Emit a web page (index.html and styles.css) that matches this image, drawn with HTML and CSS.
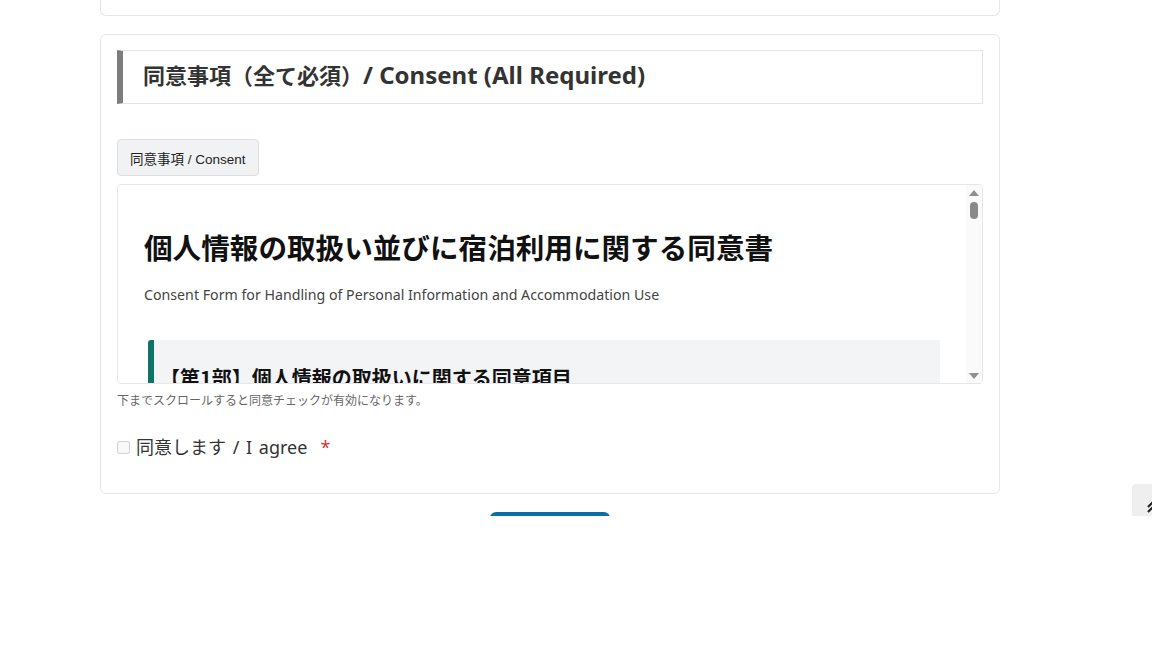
FILE: index.html
```html
<!DOCTYPE html>
<html lang="ja">

<head>
    <meta charset="UTF-8">
    <title>同意事項 / Consent</title>
    <link rel="stylesheet" href="styles.css">
</head>

<body>
    <div id="tela">
        <div id="conteudo">
            <div class="cartao cartao-anterior"></div>

            <div class="cartao">
                <h2 class="secao-titulo">同意事項（全て必須）<span class="en">/ Consent (All Required)</span></h2>

                <button type="button" class="aba">同意事項 / Consent</button>

                <div class="termo">
                    <div class="termo-texto">
                        <h1>個人情報の取扱い並びに宿泊利用に関する同意書</h1>
                        <p class="termo-sub">Consent Form for Handling of Personal Information and Accommodation Use</p>
                        <div class="parte">
                            <h3>【第1部】個人情報の取扱いに関する同意項目</h3>
                            <p>当施設は、宿泊者の個人情報を適切に取り扱います。</p>
                        </div>
                    </div>
                    <div class="barra">
                        <span class="seta-cima"></span>
                        <span class="polegar"></span>
                        <span class="trilho"></span>
                        <span class="seta-baixo"></span>
                    </div>
                </div>

                <p class="aviso">下までスクロールすると同意チェックが有効になります。</p>

                <label class="concordo">
                    <input type="checkbox" disabled>
                    <span>同意します / I agree</span>
                    <span class="obrigatorio">*</span>
                </label>
            </div>

            <div class="acoes">
                <button type="submit" class="enviar">送信する / Submit</button>
            </div>
        </div>

        <a href="#" class="topo" aria-label="ページトップへ">
            <svg width="20" height="20" viewBox="0 0 20 20" fill="none" stroke="#222" stroke-width="2.2">
                <path d="M4 11 L10 5 L16 11" />
                <path d="M4 16 L10 10 L16 16" />
            </svg>
        </a>
    </div>
</body>

</html>
```

FILE: styles.css
```css
* {
    box-sizing: border-box;
}

body {
    margin: 0;
    background-color: #FFF;
    font-family: "Noto Sans", "Noto Sans CJK JP", sans-serif;
    color: #333;
}

#tela {
    position: relative;
    height: 516px;
    overflow: hidden;
}

#conteudo {
    width: 900px;
    margin-left: 100px;
}

.cartao {
    border: 1px solid #e6e7e9;
    border-radius: 6px;
    background-color: #FFF;
    padding: 15px 16px 32px;
    margin-bottom: 18px;
}

.cartao-anterior {
    height: 16px;
    padding: 0;
    border-top: none;
    border-radius: 0 0 6px 6px;
}

.secao-titulo {
    margin: 0 0 35px;
    padding: 8px 20px 13px;
    border: 1px solid #e3e4e6;
    border-left: 6px solid #7d7d7d;
    font-family: "Noto Sans CJK JP", sans-serif;
    font-size: 22px;
    font-weight: 700;
    line-height: 31px;
    color: #333;
}

.secao-titulo .en {
    font-family: "Noto Sans", sans-serif;
    font-size: 24px;
}

.aba {
    display: block;
    height: 37px;
    padding: 0 12px;
    margin-bottom: 8px;
    border: 1px solid #dcdde0;
    border-radius: 4px;
    background-color: #f1f2f4;
    font-family: "Liberation Sans", "Noto Sans CJK JP", sans-serif;
    font-size: 13.5px;
    color: #222;
}

.termo {
    display: flex;
    height: 200px;
    border: 1px solid #e6e7e9;
    border-radius: 4px;
    overflow: hidden;
}

.termo-texto {
    flex-grow: 1;
    overflow: hidden;
    padding: 42px 26px 0;
    color: #111;
}

.termo-texto h1 {
    margin: 0;
    font-size: 28.6px;
    font-weight: 700;
    line-height: 40px;
    font-family: "Noto Sans CJK JP", sans-serif;
}

.termo-sub {
    margin: 16px 0 0;
    font-size: 14.2px;
    line-height: 24px;
    color: #444;
}

.parte {
    margin: 33px 0 0 4px;
    padding: 21px 20px 10px 6px;
    border-left: 6px solid #0f7466;
    border-radius: 3px 0 0 0;
    background-color: #f3f4f6;
}

.parte h3 {
    margin: 0;
    font-family: "Noto Sans CJK JP", sans-serif;
    font-size: 20px;
    font-weight: 700;
    line-height: 34px;
    color: #111;
}

.barra {
    display: flex;
    flex-direction: column;
    align-items: center;
    width: 16px;
    padding: 5px 0 4px;
    background-color: #fafafa;
}

.seta-cima,
.seta-baixo {
    width: 0;
    height: 0;
    border-left: 5px solid transparent;
    border-right: 5px solid transparent;
}

.seta-cima {
    border-bottom: 6px solid #8f8f8f;
}

.seta-baixo {
    border-top: 6px solid #8f8f8f;
}

.polegar {
    width: 8px;
    height: 17px;
    margin-top: 6px;
    border-radius: 4px;
    background-color: #8a8a8a;
}

.trilho {
    flex-grow: 1;
}

.aviso {
    margin: 9px 0 0;
    font-family: "Noto Sans CJK JP", sans-serif;
    font-size: 12px;
    line-height: 14px;
    color: #666;
}

.concordo {
    display: flex;
    align-items: center;
    margin-top: 26px;
    font-size: 18px;
    line-height: 28px;
    word-spacing: 2px;
    color: #333;
}

.concordo input {
    width: 13px;
    height: 13px;
    margin: 0 6px 0 0;
}

.obrigatorio {
    margin-left: 13px;
    color: #d9363e;
}

.acoes {
    display: flex;
    justify-content: center;
}

.enviar {
    width: 120px;
    height: 44px;
    border: none;
    border-radius: 6px;
    background-color: #0b6da6;
    color: #FFF;
    font-size: 16px;
}

.topo {
    position: absolute;
    top: 484px;
    right: -24px;
    display: flex;
    align-items: center;
    justify-content: center;
    width: 44px;
    height: 44px;
    border-radius: 4px;
    background-color: #efeff0;
}
```
